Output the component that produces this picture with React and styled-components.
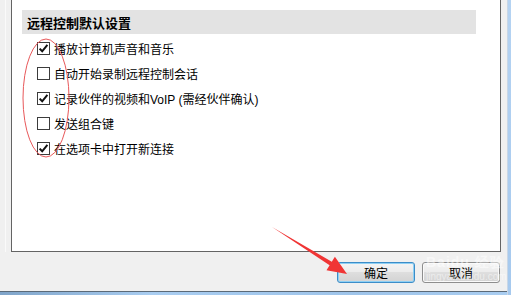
import React from 'react';
import styled, { createGlobalStyle } from 'styled-components';

const GlobalStyle = createGlobalStyle`
  html, body {
    margin: 0;
    padding: 0;
    background: #f0f0f0;
  }
  body {
    font-family: "Liberation Sans", "Noto Sans CJK SC", sans-serif;
    font-size: 12px;
    color: #000;
  }
`;

const Window = styled.div`
  position: relative;
  display: flex;
  width: 511px;
  height: 295px;
  overflow: hidden;
  background: #f0f0f0;
`;

const Main = styled.div`
  flex: 1;
  display: flex;
  flex-direction: column;
`;

const RightFrame = styled.div`
  width: 4px;
  box-sizing: border-box;
  border-left: 1px solid #c9d7e6;
  background: linear-gradient(to bottom, #b5d3f2, #a6c9ee);
`;

const BottomFrame = styled.div`
  height: 3px;
  border-top: 1px solid #5b6a78;
  background: linear-gradient(to right, #7fa4c9, #a9cdf1 30%, #9ec4ea 70%, #a9cdf1);
`;

const Body = styled.div`
  flex: 1;
  display: flex;
  flex-direction: column;
  padding-left: 5px;
  padding-right: 6px;
`;

const Gutter = styled.div`
  flex: 1;
  display: flex;
  border-left: 1px solid #fafafa;
  padding-left: 5px;
`;

const Panel = styled.div`
  flex: 1;
  background: #fff;
  border: 1px solid #646464;
  border-top: none;
  padding-top: 10px;
  box-sizing: border-box;
  height: 252px;
`;

const SectionHeader = styled.div`
  margin-left: 10px;
  width: 454px;
  height: 24px;
  background: #e3e3e3;
  display: flex;
  align-items: center;
  padding-left: 5px;
  box-sizing: border-box;
  font-size: 13px;
  font-weight: bold;
  font-family: "Noto Sans CJK SC", sans-serif;
`;

const OptionList = styled.div`
  display: flex;
  flex-direction: column;
  margin-top: 2px;
  padding-left: 25px;
`;

const OptionRow = styled.label`
  display: flex;
  align-items: center;
  gap: 4px;
  height: 25px;
  white-space: nowrap;
`;

const Box = styled.span`
  width: 13px;
  height: 13px;
  box-sizing: border-box;
  border: 1px solid #3c3c3c;
  background: #fff;
  display: flex;
  align-items: center;
  justify-content: center;
`;

const Footer = styled.div`
  height: 39px;
  display: flex;
  justify-content: flex-end;
  align-items: flex-start;
  gap: 7px;
  padding: 10px 1px 0 0;
  box-sizing: border-box;
`;

const Button = styled.button`
  width: 78px;
  height: 21px;
  padding: 0;
  font-family: "Noto Sans CJK SC", sans-serif;
  font-size: 12px;
  color: #000;
  border-radius: 3px;
  border: 1px solid ${(p) => (p.$primary ? '#3c8dc8' : '#8e8e8e')};
  box-shadow: ${(p) =>
    p.$primary ? 'inset 0 0 0 1px #8fd0f4' : 'inset 0 0 0 1px #fafafa'};
  background: linear-gradient(
    to bottom,
    #f4f4f4 0%,
    #ececec 45%,
    #dedede 50%,
    #d3d3d3 100%
  );
  display: flex;
  align-items: center;
  justify-content: center;
  line-height: 1;
`;

const Watermark = styled.div`
  position: absolute;
  left: 426px;
  top: 255px;
  color: rgba(255, 255, 255, 0.5);
  font-family: "Liberation Sans", sans-serif;
  line-height: 1;
  pointer-events: none;
`;

const WmBig = styled.div`
  height: 15px;
  font-size: 14px;
  font-weight: bold;
  letter-spacing: 1px;
`;

const WmSmall = styled.div`
  height: 12px;
  font-size: 10px;
  margin-top: 2px;
`;

const Overlay = styled.svg`
  position: absolute;
  left: 0;
  top: 0;
  pointer-events: none;
`;

const Check = () => (
  <svg width="11" height="11" viewBox="0 0 11 11">
    <path d="M1.6 5.6 L4.2 8.3 L9.4 1.8" fill="none" stroke="#111" strokeWidth="2" />
  </svg>
);

const options = [
  { label: '播放计算机声音和音乐', checked: true },
  { label: '自动开始录制远程控制会话', checked: false },
  { label: '记录伙伴的视频和VoIP (需经伙伴确认)', checked: true },
  { label: '发送组合键', checked: false },
  { label: '在选项卡中打开新连接', checked: true },
];

const App = () => (
  <>
    <GlobalStyle />
    <Window>
      <Main>
        <Body>
          <Gutter>
            <Panel>
              <SectionHeader>远程控制默认设置</SectionHeader>
              <OptionList>
                {options.map((o) => (
                  <OptionRow key={o.label}>
                    <Box>{o.checked && <Check />}</Box>
                    <span>{o.label}</span>
                  </OptionRow>
                ))}
              </OptionList>
            </Panel>
          </Gutter>
          <Footer>
            <Button $primary>确定</Button>
            <Button>取消</Button>
          </Footer>
        </Body>
        <BottomFrame />
      </Main>
      <RightFrame />

      <Watermark>
        <WmBig>Baidu 经验</WmBig>
        <WmSmall>jingyan.baidu.com</WmSmall>
      </Watermark>

      <Overlay width="511" height="295" viewBox="0 0 511 295">
        <ellipse cx="46" cy="98" rx="23" ry="59" fill="none" stroke="#e8585a" strokeWidth="1" />
        <polygon
          points="272,227 331.8,261.8 334.9,256.7 347,274 326.5,270.3 329.6,265.2"
          fill="#f03535"
        />
      </Overlay>
    </Window>
  </>
);

export default App;
